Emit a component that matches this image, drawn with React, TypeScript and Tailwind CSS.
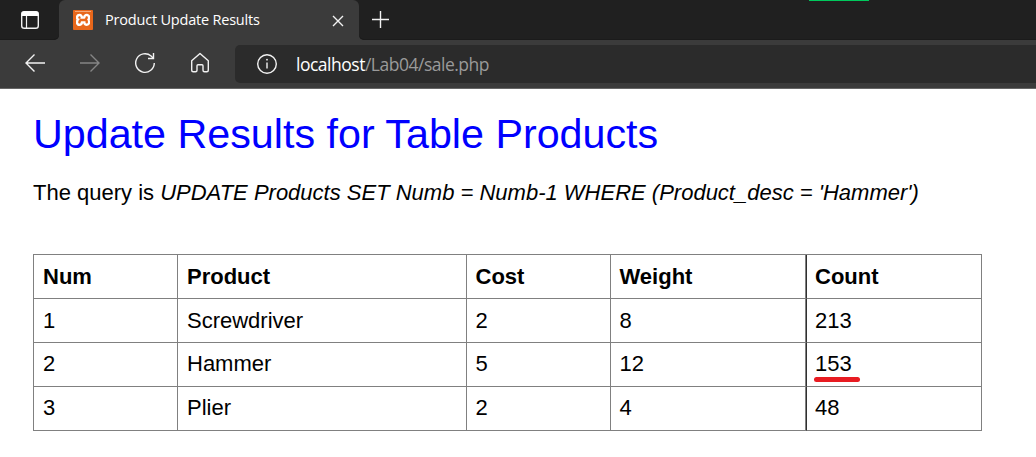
import { SiXampp } from "react-icons/si";

const stroke = { fill: "none", stroke: "#f2f2f2", strokeWidth: 1.4 } as const;

function TabActionsIcon() {
  return (
    <svg width="20" height="20" viewBox="0 0 20 20" className="block">
      <rect x="1.7" y="1.7" width="16.6" height="16.6" rx="2.6" {...stroke} />
      <path d="M1.500 6V4a2.800 2.800 0 0 1 2.800-2.800h11.400A2.800 2.800 0 0 1 18.500 4v2z" fill="#fff" />
      <path d="M6.500 6v12" {...stroke} strokeWidth={1.2} />
    </svg>
  );
}

function XamppIcon() {
  return (
    <div className="relative size-5 overflow-hidden rounded-[1px] bg-[#e8671b]">
      <div className="absolute inset-[3px] bg-white" />
      <SiXampp className="absolute inset-0 size-5 text-[#e8671b]" />
      <div className="absolute inset-x-[2px] top-px h-px bg-[#f4a878]" />
    </div>
  );
}

function ArrowIcon({ forward = false }: { forward?: boolean }) {
  return (
    <svg width="22" height="20" viewBox="0 0 22 20" className="block">
      <path
        d={forward ? "M1 10h19M11.500 1.500 20 10l-8.500 8.500" : "M21 10H2M10.500 1.500 2 10l8.500 8.500"}
        fill="none"
        stroke={forward ? "#858585" : "#f2f2f2"}
        strokeWidth="1.400"
      />
    </svg>
  );
}

function ReloadIcon() {
  return (
    <svg width="22" height="22" viewBox="0 0 22 22" className="block">
      <path d="M20.300 11a9.300 9.300 0 1 1-3.200-7l2.200 2.300" {...stroke} />
      <path d="M19.500 1v5.500H14" {...stroke} />
    </svg>
  );
}

function HomeIcon() {
  return (
    <svg width="20" height="22" viewBox="0 0 20 22" className="block">
      <path
        d="M1.700 8.800 10 1.500l8.300 7.300v9.400q0 1.500-1.500 1.500h-2.300q-1.500 0-1.500-1.500v-4.400q0-1-1-1H8q-1 0-1 1v4.400q0 1.500-1.500 1.500H3.200q-1.500 0-1.500-1.500z"
        {...stroke}
        strokeLinejoin="round"
      />
    </svg>
  );
}

function InfoIcon() {
  return (
    <svg width="22" height="22" viewBox="0 0 22 22" className="block">
      <circle cx="11" cy="11" r="9.300" {...stroke} />
      <path d="M11 9.500v6" {...stroke} />
      <circle cx="11" cy="6.700" r="0.900" fill="#f2f2f2" />
    </svg>
  );
}

const rows = [
  ["1", "Screwdriver", "2", "8", "213"],
  ["2", "Hammer", "5", "12", "153"],
  ["3", "Plier", "2", "4", "48"],
];

const base = "relative border-r border-b border-[#808080] text-left align-top h-11";
const columns = [
  "pl-[9px]",
  "pl-[9px]",
  "pl-[8.500px]",
  "pl-[8.500px] shadow-[inset_-1px_0_0_#808080] border-r-[#303030]",
  "pl-2",
];

export default function App() {
  return (
    <div className="h-[457px] w-[1036px] overflow-hidden bg-white font-['Liberation_Sans',Arial,sans-serif] text-black">
      <header className="relative font-['Open_Sans','Noto_Sans',sans-serif]">
        <div className="flex h-10 bg-[#3b3b3b]">
          <div className="flex w-[59px] items-center rounded-br-[5px] bg-[#202020] pl-5 shadow-[inset_0_-1px_0_#1b1b1b]">
            <TabActionsIcon />
          </div>
          <div className="w-[300px] bg-[#202020]">
            <div className="flex h-10 items-center rounded-t-[6px] bg-[#3b3b3b] pl-3.5">
              <XamppIcon />
              <span className="-mt-px ml-3 w-[220px] whitespace-nowrap text-[14.500px] leading-5 tracking-[-0.200px] text-white">
                Product Update Results
              </span>
              <svg width="12" height="12" viewBox="0 0 12 12" className="ml-[7px] mt-0.5">
                <path d="M1 1l10 10M11 1 1 11" {...stroke} />
              </svg>
            </div>
          </div>
          <div className="flex flex-1 items-center rounded-bl-[5px] bg-[#202020] pl-[13px] shadow-[inset_0_-1px_0_#1b1b1b]">
            <svg width="18" height="18" viewBox="0 0 18 18" className="block">
              <path d="M8.500 0v17M0 8.500h17" {...stroke} />
            </svg>
          </div>
        </div>
        <div className="absolute left-[809px] top-0 h-px w-[60px] bg-[#00c95c]" />
        <div className="flex h-[49px] items-start border-b border-[#666] bg-[#3b3b3b]">
          <div className="flex h-[46px] w-[235px] items-center">
            <div className="ml-6"><ArrowIcon /></div>
            <div className="ml-[33px]"><ArrowIcon forward /></div>
            <div className="ml-[33px]"><ReloadIcon /></div>
            <div className="ml-[34px]"><HomeIcon /></div>
          </div>
          <div className="mt-[5px] flex h-[38px] flex-1 items-center rounded-l-[5px] bg-[#2b2b2b] pl-[21px]">
            <InfoIcon />
            <span className="-mt-px ml-[18px] whitespace-nowrap text-[17.500px] leading-6 tracking-[-0.490px] text-[#9a9a9a]">
              <span className="text-white">localhost</span>/Lab04/sale.php
            </span>
          </div>
        </div>
      </header>
      <main className="pl-[33px] pt-[21px]">
        <h1 className="h-12 whitespace-nowrap text-[41.250px] leading-[48px] text-[#0000ff]">
          Update Results for Table Products
        </h1>
        <p className="mt-[22px] h-[26px] whitespace-nowrap text-[22px] leading-[26px]">
          The query is <i>UPDATE Products SET Numb = Numb-1 WHERE (Product_desc = 'Hammer')</i>
        </p>
        <table className="mt-12 w-[949px] table-fixed border-separate border-spacing-0 border-l border-t border-[#808080] text-[22px]">
          <colgroup>
            <col className="w-[144px]" />
            <col className="w-[289px]" />
            <col className="w-[144px]" />
            <col className="w-[196px]" />
            <col className="w-[175px]" />
          </colgroup>
          <thead>
            <tr className="leading-[43px]">
              {["Num", "Product", "Cost", "Weight", "Count"].map((name, i) => (
                <th key={name} className={`${base} ${columns[i]}`}>{name}</th>
              ))}
            </tr>
          </thead>
          <tbody>
            {rows.map((row, r) => (
              <tr key={row[0]} className={r === 0 ? "leading-[43px]" : "leading-[41px]"}>
                {row.map((value, i) => (
                  <td key={i} className={`${base} ${columns[i]}`}>
                    {value}
                    {value === "153" && (
                      <span className="absolute left-[6.500px] top-[34px] h-[5px] w-[46px] rounded-full bg-[#e81c22]" />
                    )}
                  </td>
                ))}
              </tr>
            ))}
          </tbody>
        </table>
      </main>
    </div>
  );
}
